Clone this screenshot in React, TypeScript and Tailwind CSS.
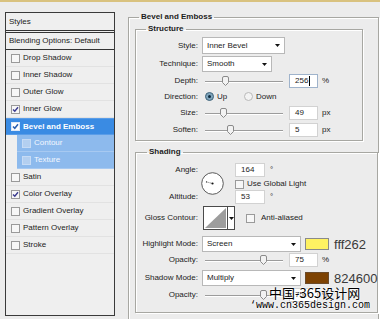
import React from "react";

type Item = { label: string; checked?: boolean; kind?: "active" | "sub" };

const styleItems: Item[] = [
  { label: "Drop Shadow" },
  { label: "Inner Shadow" },
  { label: "Outer Glow" },
  { label: "Inner Glow", checked: true },
  { label: "Bevel and Emboss", checked: true, kind: "active" },
  { label: "Contour", kind: "sub" },
  { label: "Texture", kind: "sub" },
  { label: "Satin" },
  { label: "Color Overlay", checked: true },
  { label: "Gradient Overlay" },
  { label: "Pattern Overlay" },
  { label: "Stroke" },
];

const Check = ({ checked, sub }: { checked?: boolean; sub?: boolean }) => (
  <span
    className={`flex h-[9px] w-[9px] shrink-0 items-center justify-center border ${
      sub ? "border-[#c6dbf5] bg-[#b3cff0]" : "border-[#9a9a9a] bg-[#f7f7f7]"
    }`}
  >
    {checked && (
      <svg width="7" height="7" viewBox="0 0 7 7">
        <path d="M1 3.4 L2.8 5.3 L6 1.2" fill="none" stroke="#3b3b8f" strokeWidth="1.4" />
      </svg>
    )}
  </span>
);

const Arrow = () => (
  <svg width="5" height="3" viewBox="0 0 5 3" className="shrink-0">
    <path d="M0 0 H5 L2.5 3 Z" fill="#111" />
  </svg>
);

const Select = ({ value, w }: { value: string; w: string }) => (
  <div className={`flex h-full items-center justify-between border border-[#b8b8b8] bg-white pl-[4px] pr-[4px] ${w}`}>
    <span>{value}</span>
    <Arrow />
  </div>
);

const Field = ({ value, caret }: { value: string; caret?: boolean }) => (
  <div
    className={`flex h-[14px] w-[29px] items-center border bg-white pl-[5px] ${
      caret ? "border-[#9fb3cb]" : "border-[#d2d2d2]"
    }`}
  >
    {value}
    {caret && <span className="ml-px h-[10px] w-px bg-black" />}
  </div>
);

// thumb = px from the left end of the track
const Slider = ({ thumb }: { thumb: number }) => (
  <div className="relative h-full w-[80px] shrink-0">
    <div className="absolute left-0 right-[2px] top-1/2 h-px bg-[#9c9c9c]" />
    <div className="absolute left-0 right-[2px] top-1/2 mt-px h-px bg-white" />
    <svg
      width="7"
      height="10"
      viewBox="0 0 7 10"
      className="absolute top-1/2 -translate-y-1/2"
      style={{ left: thumb - 3 }}
    >
      <path
        d="M0.5 2 Q0.5 0.5 2 0.5 H5 Q6.5 0.5 6.5 2 V6.5 L3.5 9.5 L0.5 6.5 Z"
        fill="#f2f2f2"
        stroke="#8a8a8a"
      />
    </svg>
  </div>
);

const Label = ({ children }: { children: React.ReactNode }) => (
  <span className="w-[62px] shrink-0 text-right">{children}</span>
);

const Radio = ({ on }: { on?: boolean }) => (
  <span
    className={`flex h-[9px] w-[9px] shrink-0 items-center justify-center rounded-full border ${
      on ? "border-[#3f6279] bg-[#7ea3ba]" : "border-[#b9b9b9] bg-[#f3f3f3]"
    }`}
  >
    {on && <span className="h-[3px] w-[3px] rounded-full bg-[#0d2a3e]" />}
  </span>
);

const groupBox =
  "border border-[#a7a7a2] shadow-[inset_1px_1px_0_#fff,1px_1px_0_#fff]";

export default function App() {
  return (
    <div className="relative h-[319px] w-[380px] overflow-hidden bg-[#ececec] font-['Liberation_Sans',Arial,sans-serif] text-[8px] text-[#1c1c1c]">
      <div className="h-[2px] bg-[#d9c27f]" />
      <div className="flex items-start">
        {/* Styles list */}
        <div className="ml-[5px] mt-[10px] h-[304px] w-[110px] shrink-0 border border-[#3a3a3a] bg-[#efefef]">
          <div className="flex h-[20px] items-center border-b-[3px] border-double border-[#333] pl-[3px]">
            Styles
          </div>
          <div className="flex h-[17px] items-center border-b border-[#333] pl-[3px]">
            Blending Options: Default
          </div>
          {styleItems.map((item) =>
            item.kind === "active" ? (
              <div
                key={item.label}
                className="flex h-[17px] items-center border-y border-[#5a9de8] bg-[#3a8be3] pl-[5px] font-bold text-white"
              >
                <span className="flex h-[9px] w-[9px] items-center justify-center border border-[#dfe9f7] bg-white">
                  <svg width="7" height="7" viewBox="0 0 7 7">
                    <path d="M1 3.4 L2.8 5.3 L6 1.2" fill="none" stroke="#2b5fb0" strokeWidth="1.5" />
                  </svg>
                </span>
                <span className="ml-[3px]">{item.label}</span>
              </div>
            ) : item.kind === "sub" ? (
              <div
                key={item.label}
                className="ml-[11px] flex h-[17px] items-center border-b border-[#a7c9f1] bg-[#8dbaed] pl-[5px] text-[#f3f8ff]"
              >
                <Check sub />
                <span className="ml-[3px]">{item.label}</span>
              </div>
            ) : (
              <div
                key={item.label}
                className="flex h-[17px] items-center border-b border-[#e2e2e2] pl-[5px]"
              >
                <Check checked={item.checked} />
                <span className="ml-[3px]">{item.label}</span>
              </div>
            )
          )}
        </div>

        {/* Bevel and Emboss settings */}
        <fieldset className={`ml-[13px] mt-[9px] h-[330px] w-[241px] shrink-0 pl-[6px] ${groupBox}`}>
          <legend className="ml-[4px] px-[2px] font-bold leading-[12px]">Bevel and Emboss</legend>

          <fieldset className={`w-[228px] pb-[2px] ${groupBox}`}>
            <legend className="ml-[10px] px-[2px] font-bold leading-[12px]">Structure</legend>

            <div className="mt-[2px] flex h-[17px] items-center">
              <Label>Style:</Label>
              <div className="ml-[4px] h-full">
                <Select value="Inner Bevel" w="w-[83px]" />
              </div>
            </div>
            <div className="mt-[2px] flex h-[16px] items-center">
              <Label>Technique:</Label>
              <div className="ml-[4px] h-full">
                <Select value="Smooth" w="w-[70px]" />
              </div>
            </div>
            <div className="mt-[1px] flex h-[15px] items-center">
              <Label>Depth:</Label>
              <div className="ml-[7px] h-full">
                <Slider thumb={20} />
              </div>
              <div className="ml-[4px]">
                <Field value="256" caret />
              </div>
              <span className="ml-[4px]">%</span>
            </div>
            <div className="flex h-[17px] items-center">
              <Label>Direction:</Label>
              <div className="ml-[7px] flex w-[39px] items-center">
                <Radio on />
                <span className="ml-[3px]">Up</span>
              </div>
              <Radio />
              <span className="ml-[3px]">Down</span>
            </div>
            <div className="flex h-[16px] items-center">
              <Label>Size:</Label>
              <div className="ml-[7px] h-full">
                <Slider thumb={18} />
              </div>
              <div className="ml-[4px]">
                <Field value="49" />
              </div>
              <span className="ml-[4px]">px</span>
            </div>
            <div className="mt-[1px] flex h-[16px] items-center">
              <Label>Soften:</Label>
              <div className="ml-[7px] h-full">
                <Slider thumb={25} />
              </div>
              <div className="ml-[4px]">
                <Field value="5" />
              </div>
              <span className="ml-[4px]">px</span>
            </div>
          </fieldset>

          <fieldset className={`mt-[5px] w-[228px] pb-[10px] ${groupBox}`}>
            <legend className="ml-[11px] px-[2px] font-bold leading-[12px]">Shading</legend>

            <div className="mt-[5px] flex">
              <div className="flex w-[62px] shrink-0 flex-col justify-between text-right">
                <span className="flex h-[14px] items-center justify-end">Angle:</span>
                <span className="flex h-[14px] items-center justify-end">Altitude:</span>
              </div>
              <div className="ml-[3px] self-center">
                <svg width="23" height="23" viewBox="0 0 23 23">
                  <circle cx="11.5" cy="11.5" r="10.8" fill="#fff" stroke="#5a5a5a" />
                  <path d="M5.5 9.9 L11 11.4" stroke="#444" strokeWidth="0.8" strokeDasharray="1 1" />
                  <circle cx="11.5" cy="11.5" r="1.1" fill="#111" />
                  <circle cx="5.5" cy="9.9" r="0.6" fill="#333" />
                </svg>
              </div>
              <div className="ml-[11px] flex flex-col">
                <div className="flex items-center">
                  <div className="flex h-[14px] w-[30px] items-center border border-[#d2d2d2] bg-white pl-[5px]">
                    164
                  </div>
                  <span className="ml-[5px]">°</span>
                </div>
                <div className="mt-[2px] flex h-[10px] items-center">
                  <Check />
                  <span className="ml-[3px]">Use Global Light</span>
                </div>
                <div className="mt-[1px] flex items-center">
                  <div className="flex h-[14px] w-[30px] items-center border border-[#d2d2d2] bg-white pl-[5px]">
                    53
                  </div>
                  <span className="ml-[5px]">°</span>
                </div>
              </div>
            </div>

            <div className="mt-[2px] flex h-[24px] items-center">
              <Label>Gloss Contour:</Label>
              <svg width="25" height="24" viewBox="0 0 25 24" className="ml-[5px] shrink-0">
                <rect x="0.5" y="0.5" width="24" height="23" fill="#fff" stroke="#4a4a4a" />
                <path d="M2 22 L23 2 V22 Z" fill="#9d9d9d" />
              </svg>
              <div className="flex h-full w-[7px] items-center justify-center border border-l-0 border-[#4a4a4a] bg-white">
                <Arrow />
              </div>
              <div className="ml-[11px]">
                <Check />
              </div>
              <span className="ml-[6px]">Anti-aliased</span>
            </div>

            <div className="mt-[6px] flex h-[16px] items-center">
              <Label>Highlight Mode:</Label>
              <div className="ml-[4px] h-full">
                <Select value="Screen" w="w-[99px]" />
              </div>
              <div className="ml-[4px] h-[12px] w-[24px] border border-[#8a8a8a] bg-[#fff262]" />
              <span className="ml-[5px] text-[13px] leading-none text-[#3a3a3a]">fff262</span>
            </div>
            <div className="mt-[1px] flex h-[14px] items-center">
              <Label>Opacity:</Label>
              <div className="ml-[7px] h-full">
                <Slider thumb={58} />
              </div>
              <div className="ml-[4px]">
                <Field value="75" />
              </div>
              <span className="ml-[4px]">%</span>
            </div>
            <div className="mt-[3px] flex h-[16px] items-center">
              <Label>Shadow Mode:</Label>
              <div className="ml-[4px] h-full">
                <Select value="Multiply" w="w-[99px]" />
              </div>
              <div className="ml-[4px] h-[12px] w-[24px] border border-[#6a4a2a] bg-[#7d4202]" />
              <span className="ml-[5px] text-[13px] leading-none text-[#3a3a3a]">824600</span>
            </div>
            <div className="mt-[2px] flex h-[14px] items-center">
              <Label>Opacity:</Label>
              <div className="ml-[7px] h-full">
                <Slider thumb={58} />
              </div>
              <div className="ml-[4px]">
                <Field value="75" />
              </div>
              <span className="ml-[4px]">%</span>
            </div>
          </fieldset>
        </fieldset>
      </div>

      {/* watermark */}
      <div className="absolute left-[269px] top-[286px] font-['Noto_Sans_CJK_SC',sans-serif] text-[13px] leading-[14px] text-black [text-shadow:0_0_2px_#fff,0_0_2px_#fff]">
        中国-365设计网
      </div>
      <div className="absolute left-[250px] top-[300px] font-['Liberation_Mono',monospace] text-[10px] leading-[12px] text-black [text-shadow:0_0_2px_#fff,0_0_2px_#fff]">
        ‘www.cn365design.com
      </div>
    </div>
  );
}
